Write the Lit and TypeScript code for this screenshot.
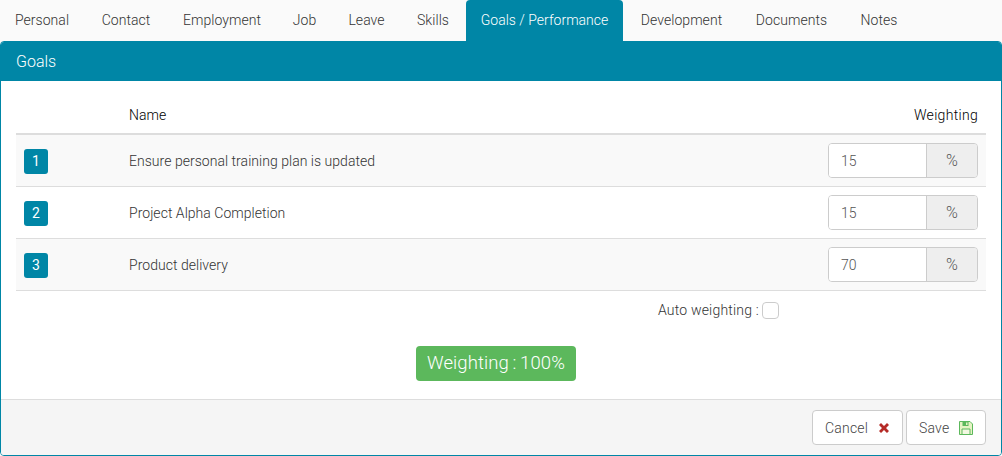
import { LitElement, html, css } from 'lit';
import { customElement } from 'lit/decorators.js';

const TABS = [
  { label: 'Personal', width: 84 },
  { label: 'Contact', width: 80 },
  { label: 'Employment', width: 108 },
  { label: 'Job', width: 53 },
  { label: 'Leave', width: 67 },
  { label: 'Skills', width: 62 },
  { label: 'Goals / Performance', width: 157 },
  { label: 'Development', width: 113 },
  { label: 'Documents', width: 103 },
  { label: 'Notes', width: 68 },
];
const GOALS = [
  { name: 'Ensure personal training plan is updated', weight: '15' },
  { name: 'Project Alpha Completion', weight: '15' },
  { name: 'Product delivery', weight: '70' },
];

@customElement('app-root')
export class AppRoot extends LitElement {
  static styles = css`
    :host {
      display: block;
      width: 1002px;
      height: 456px;
      overflow: hidden;
      background: #fafafa;
      font-family: Roboto, "Liberation Sans", sans-serif;
      font-weight: 300;
      font-size: 14px;
      color: #333;
    }
    * { box-sizing: border-box; }

    .tabs {
      display: flex;
      height: 41px;
      gap: 2px;
    }
    .tab {
      text-align: center;
      line-height: 41px;
      white-space: nowrap;
      color: #333;
      letter-spacing: 0.05px;
    }
    .tab.active {
      background: #0086a6;
      color: #fff;
      border-radius: 4px 4px 0 0;
      letter-spacing: 0;
    }

    .panel {
      height: 415px;
      display: flex;
      flex-direction: column;
      background: #fff;
      border: 1px solid #0086a6;
      border-radius: 4px;
      overflow: hidden;
    }
    .heading {
      height: 39px;
      flex: none;
      background: #0086a6;
      color: #fff;
      font-size: 16px;
      line-height: 39px;
      padding-left: 15px;
    }
    .body {
      flex: 1;
      padding: 0 15px;
    }

    .row {
      display: grid;
      grid-template-columns: 105px 1fr 150px;
      align-items: center;
      padding: 0 8px;
      height: 52px;
      border-bottom: 1px solid #ddd;
      color: #333;
      letter-spacing: 0.03px;
    }
    .row:nth-child(even) { background: #f9f9f9; }
    .row.head {
      height: 54px;
      padding-top: 16px;
      border-bottom: 2px solid #ddd;
      color: #000;
      background: #fff;
      letter-spacing: 0.05px;
    }
    .row.head .right { text-align: right; letter-spacing: 0.3px; }

    .badge {
      width: 24px;
      height: 25px;
      margin-top: 1px;
      border-radius: 3px;
      background: #0086a6;
      color: #fff;
      font-weight: 400;
      font-size: 14px;
      display: flex;
      align-items: center;
      justify-content: center;
    }

    .group {
      display: flex;
      height: 35px;
      border: 1px solid #ccc;
      border-radius: 4px;
      overflow: hidden;
    }
    .group .value {
      width: 98px;
      background: #fff;
      padding-left: 12px;
      line-height: 35px;
      color: #555;
      border-right: 1px solid #ccc;
    }
    .group .addon {
      flex: 1;
      background: #eee;
      text-align: center;
      font-size: 16px;
      line-height: 33px;
      color: #555;
    }

    .auto {
      display: flex;
      justify-content: flex-end;
      align-items: center;
      gap: 3px;
      height: 38px;
      padding-right: 207px;
      letter-spacing: 0.2px;
    }
    .check {
      width: 17px;
      height: 17px;
      border: 1px solid #ccc;
      border-radius: 4px;
      background: #fff;
    }

    .total-wrap {
      display: flex;
      justify-content: center;
      padding: 17px 10px 0 0;
    }
    .total {
      width: 160px;
      height: 35px;
      background: #5cb85c;
      color: #fff;
      border-radius: 4px;
      font-size: 18.5px;
      line-height: 35px;
      text-align: center;
      word-spacing: -1px;
      letter-spacing: 0.1px;
    }

    .footer {
      height: 56px;
      flex: none;
      display: flex;
      justify-content: flex-end;
      align-items: center;
      gap: 3px;
      padding: 0 15px 0 0;
      background: #f5f5f5;
      border-top: 1px solid #ddd;
    }
    .btn {
      display: flex;
      align-items: center;
      justify-content: space-between;
      height: 35px;
      padding: 0 12px;
      background: #fff;
      border: 1px solid #ccc;
      border-radius: 4px;
      color: #444;
      letter-spacing: 0.2px;
    }
    .btn.cancel { width: 91px; }
    .btn.save { width: 80px; }
    .btn svg { display: block; }
  `;

  render() {
    return html`
      <div class="tabs">
        ${TABS.map((t) => html`
          <div class="tab ${t.label.startsWith('Goals') ? 'active' : ''}" style="width:${t.width}px">${t.label}</div>
        `)}
      </div>
      <div class="panel">
        <div class="heading">Goals</div>
        <div class="body">
          <div class="rows">
            <div class="row head">
              <div></div>
              <div>Name</div>
              <div class="right">Weighting</div>
            </div>
            ${GOALS.map((g, i) => html`
              <div class="row">
                <div class="badge">${i + 1}</div>
                <div>${g.name}</div>
                <div class="group">
                  <div class="value">${g.weight}</div>
                  <div class="addon">%</div>
                </div>
              </div>
            `)}
          </div>
          <div class="auto">
            <span>Auto weighting :</span>
            <span class="check"></span>
          </div>
          <div class="total-wrap">
            <div class="total">Weighting : 100%</div>
          </div>
        </div>
        <div class="footer">
          <div class="btn cancel">Cancel
            <svg width="12" height="12" viewBox="0 0 12 12">
              <path d="M1 3 L3 1 L6 4 L9 1 L11 3 L8 6 L11 9 L9 11 L6 8 L3 11 L1 9 L4 6 Z" fill="#b52b27"/>
            </svg>
          </div>
          <div class="btn save">Save
            <svg width="14" height="14" viewBox="0 0 14 14">
              <path d="M0.5 0.5 H11 L13.5 3 V13.5 H0.5 Z" fill="#e6f3c4" stroke="#5cb85c"/>
              <path d="M3.5 1 V5 H9.5 V1" fill="#5cb85c"/>
              <rect x="7" y="1.5" width="1.5" height="2.5" fill="#e6f3c4"/>
              <path d="M3 13 V8 H11 V13" fill="#f3f8e2" stroke="#5cb85c"/>
            </svg>
          </div>
        </div>
      </div>
    `;
  }
}
